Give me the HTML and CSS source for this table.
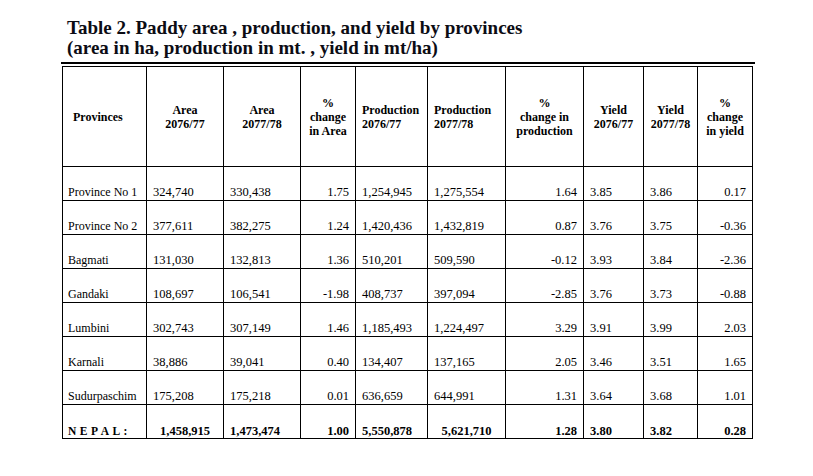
FILE: index.html
```html
<!DOCTYPE html>
<html lang="en">
<head>
<meta charset="utf-8">
<title>Table 2. Paddy area, production, and yield by provinces</title>
<link rel="stylesheet" href="styles.css">
</head>
<body>
<div class="page">
  <h1 class="title">Table 2. Paddy area , production, and yield by provinces<br>(area in ha, production in mt. , yield in mt/ha)</h1>
  <div class="rule"></div>
  <table class="data">
    <colgroup>
      <col class="c1"><col class="c2"><col class="c3"><col class="c4"><col class="c5">
      <col class="c6"><col class="c7"><col class="c8"><col class="c9"><col class="c10">
    </colgroup>
    <thead>
      <tr class="head">
        <th class="hl">Provinces</th>
        <th>Area<br>2076/77</th>
        <th>Area<br>2077/78</th>
        <th>%<br>change<br>in Area</th>
        <th class="hp">Production<br>2076/77</th>
        <th class="hp">Production<br>2077/78</th>
        <th>%<br>change in<br>production</th>
        <th>Yield<br>2076/77</th>
        <th>Yield<br>2077/78</th>
        <th>%<br>change<br>in yield</th>
      </tr>
    </thead>
    <tbody>
      <tr><td class="name">Province No 1</td><td class="l">324,740</td><td class="l">330,438</td><td class="r">1.75</td><td class="l">1,254,945</td><td class="l">1,275,554</td><td class="r">1.64</td><td class="l">3.85</td><td class="l">3.86</td><td class="r">0.17</td></tr>
      <tr><td class="name">Province No 2</td><td class="l">377,611</td><td class="l">382,275</td><td class="r">1.24</td><td class="l">1,420,436</td><td class="l">1,432,819</td><td class="r">0.87</td><td class="l">3.76</td><td class="l">3.75</td><td class="r">-0.36</td></tr>
      <tr><td class="name">Bagmati</td><td class="l">131,030</td><td class="l">132,813</td><td class="r">1.36</td><td class="l">510,201</td><td class="l">509,590</td><td class="r">-0.12</td><td class="l">3.93</td><td class="l">3.84</td><td class="r">-2.36</td></tr>
      <tr><td class="name">Gandaki</td><td class="l">108,697</td><td class="l">106,541</td><td class="r">-1.98</td><td class="l">408,737</td><td class="l">397,094</td><td class="r">-2.85</td><td class="l">3.76</td><td class="l">3.73</td><td class="r">-0.88</td></tr>
      <tr><td class="name">Lumbini</td><td class="l">302,743</td><td class="l">307,149</td><td class="r">1.46</td><td class="l">1,185,493</td><td class="l">1,224,497</td><td class="r">3.29</td><td class="l">3.91</td><td class="l">3.99</td><td class="r">2.03</td></tr>
      <tr><td class="name">Karnali</td><td class="l">38,886</td><td class="l">39,041</td><td class="r">0.40</td><td class="l">134,407</td><td class="l">137,165</td><td class="r">2.05</td><td class="l">3.46</td><td class="l">3.51</td><td class="r">1.65</td></tr>
      <tr><td class="name">Sudurpaschim</td><td class="l">175,208</td><td class="l">175,218</td><td class="r">0.01</td><td class="l">636,659</td><td class="l">644,991</td><td class="r">1.31</td><td class="l">3.64</td><td class="l">3.68</td><td class="r">1.01</td></tr>
      <tr class="total"><td class="name nepal">NEPAL:</td><td class="c">1,458,915</td><td class="l">1,473,474</td><td class="r">1.00</td><td class="l">5,550,878</td><td class="c">5,621,710</td><td class="r">1.28</td><td class="l">3.80</td><td class="l">3.82</td><td class="r">0.28</td></tr>
    </tbody>
  </table>
</div>
</body>
</html>
```

FILE: styles.css
```css
html, body {
  margin: 0;
  padding: 0;
  background: #fff;
}

.page {
  padding: 18px 0 0 62px;
  font-family: "Liberation Serif", "Times New Roman", serif;
  color: #000;
}

.title {
  margin: 0 0 4px 5px;
  font-size: 19px;
  line-height: 20px;
  font-weight: bold;
  color: #0c0c14;
}

.rule {
  width: 694px;
  height: 0;
  border-top: 2px solid #000;
  margin: 0 0 2px -1px;
}

.data {
  border-collapse: collapse;
  table-layout: fixed;
  width: 691px;
  font-size: 12.5px;
}

.c1 { width: 84px; }
.c2 { width: 77px; }
.c3 { width: 77px; }
.c4 { width: 55px; }
.c5 { width: 72px; }
.c6 { width: 78px; }
.c7 { width: 78px; }
.c8 { width: 60px; }
.c9 { width: 54px; }
.c10 { width: 55px; }

.data th,
.data td {
  border: 1px solid #000;
  padding: 0;
}

.data tr.head {
  height: 100px;
}

.data tbody tr {
  height: 34px;
}

.data th {
  font-size: 12px;
  line-height: 14px;
  font-weight: bold;
  text-align: center;
  vertical-align: middle;
}

.data th.hl {
  text-align: left;
  padding-left: 10px;
}

.data th.hp {
  text-align: left;
  padding-left: 6px;
}

.data td {
  vertical-align: bottom;
  padding-bottom: 1px;
  line-height: 14px;
  white-space: nowrap;
}

.data td.name {
  padding-left: 5px;
  font-size: 12px;
}

.data td.l {
  padding-left: 6px;
  text-align: left;
}

.data td.r {
  padding-right: 6px;
  text-align: right;
}

.data td.c {
  text-align: center;
}

.total td {
  font-weight: bold;
  padding-bottom: 0;
}

.data td.nepal {
  letter-spacing: 3.5px;
  font-size: 11.5px;
}
```
